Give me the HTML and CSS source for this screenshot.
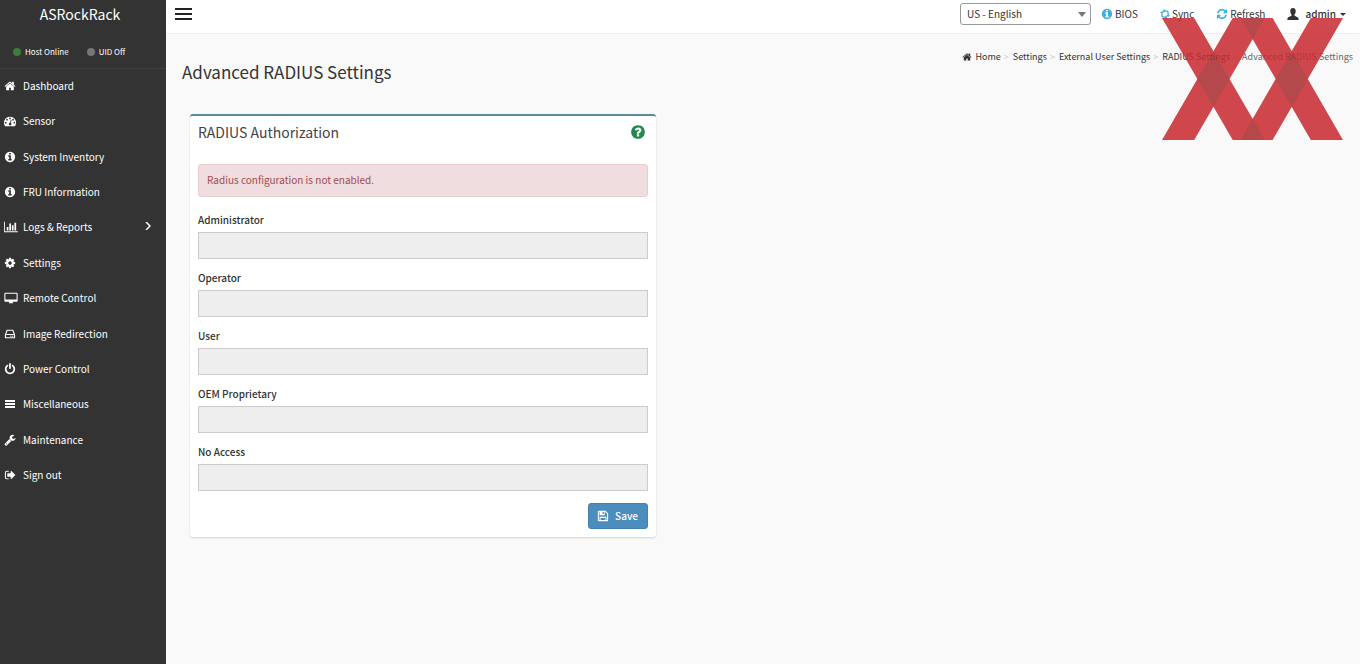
FILE: index.html
```html
<!DOCTYPE html>
<html lang="en">
<head>
<meta charset="utf-8">
<title>Advanced RADIUS Settings</title>
<link rel="stylesheet" href="styles.css">
</head>
<body>
<svg class="defs" aria-hidden="true">
  <symbol id="home" viewBox="0 0 1792 1792"><path d="M1472 992v480q0 26-19 45t-45 19h-384v-384h-256v384h-384q-26 0-45-19t-19-45v-480q0-1 .5-3t.5-3l575-474 575 474q1 2 1 6zm223-69l-62 74q-8 9-21 11h-3q-13 0-21-7l-692-577-692 577q-12 8-24 7-13-2-21-11l-62-74q-8-10-7-23.500t11-21.500l719-599q32-26 76-26t76 26l244 204v-195q0-14 9-23t23-9h192q14 0 23 9t9 23v408l219 182q10 8 11 21.500t-7 23.500z"/></symbol>
  <symbol id="gauge" viewBox="0 0 1792 1792"><path fill-rule="evenodd" d="M896 256A896 896 0 0 1 1652 1632Q1634 1664 1598 1664H194Q158 1664 140 1632A896 896 0 0 1 896 256zM256 1024a128 128 0 1 0 0 256a128 128 0 1 0 0-256zM448 576a128 128 0 1 0 0 256a128 128 0 1 0 0-256zM896 384a128 128 0 1 0 0 256a128 128 0 1 0 0-256zM1344 576a128 128 0 1 0 0 256a128 128 0 1 0 0-256zM1536 1024a128 128 0 1 0 0 256a128 128 0 1 0 0-256zM1004 764l-101 382a192 192 0 1 0 124 33l101-382q8-50-45-72-60-10-79 39z"/></symbol>
  <symbol id="info" viewBox="0 0 1792 1792"><path d="M1152 1376v-160q0-14-9-23t-23-9h-96v-512q0-14-9-23t-23-9h-320q-14 0-23 9t-9 23v160q0 14 9 23t23 9h96v320h-96q-14 0-23 9t-9 23v160q0 14 9 23t23 9h448q14 0 23-9t9-23zm-128-896v-160q0-14-9-23t-23-9h-192q-14 0-23 9t-9 23v160q0 14 9 23t23 9h192q14 0 23-9t9-23zm640 416q0 209-103 385.500t-279.500 279.500-385.500 103-385.500-103-279.500-279.500-103-385.500 103-385.500 279.500-279.500 385.500-103 385.500 103 279.500 279.500 103 385.500z"/></symbol>
  <symbol id="chart" viewBox="0 0 2048 1792"><path d="M640 896v512h-256v-512h256zm384-512v1024h-256v-1024h256zm1024 1152v128h-2048v-1536h128v1408h1920zm-640-896v768h-256v-768h256zm384-384v1152h-256v-1152h256z"/></symbol>
  <symbol id="cog" viewBox="0 0 1792 1792"><path d="M1152 896q0-106-75-181t-181-75-181 75-75 181 75 181 181 75 181-75 75-181zm512-109v222q0 12-8 23t-20 13l-185 28q-19 54-39 91 35 50 107 138 10 12 10 25t-9 23q-27 37-99 108t-94 71q-12 0-26-9l-138-108q-44 23-91 38-16 136-29 186-7 28-36 28h-222q-14 0-24.500-8.500t-11.500-21.500l-28-184q-49-16-90-37l-141 107q-10 9-25 9-14 0-25-11-126-114-165-168-7-10-7-23 0-12 8-23 15-21 51-66.500t54-70.500q-27-50-41-99l-183-27q-13-2-21-12.500t-8-23.500v-222q0-12 8-23t19-13l186-28q14-46 39-92-40-57-107-138-10-12-10-24 0-10 9-23 26-36 98.500-107.500t94.500-71.500q13 0 26 10l138 107q44-23 91-38 16-136 29-186 7-28 36-28h222q14 0 24.500 8.500t11.500 21.500l28 184q49 16 90 37l142-107q9-9 24-9 13 0 25 10 129 119 165 170 7 8 7 22 0 12-8 23-15 21-51 66.500t-54 70.500q26 50 41 98l183 28q13 2 21 12.500t8 23.500z"/></symbol>
  <symbol id="desktop" viewBox="0 0 2048 1792"><path fill-rule="evenodd" d="M160 128H1888Q2016 128 2016 256V1312Q2016 1440 1888 1440H1280V1540Q1344 1580 1344 1664H704Q704 1580 768 1540V1440H160Q32 1440 32 1312V256Q32 128 160 128zM190 256V1120H1858V256z"/></symbol>
  <symbol id="drive" viewBox="0 0 1792 1792"><path fill-rule="evenodd" d="M480 256H1312Q1390 256 1420 340L1640 980Q1664 1040 1664 1100V1400Q1664 1536 1530 1536H262Q128 1536 128 1400V1100Q128 1040 152 980L372 340Q402 256 480 256zM520 420L350 900H1442L1272 420zM290 1060V1380H1502V1060zM1040 1130a90 90 0 1 0 0 180a90 90 0 1 0 0-180zM1296 1130a90 90 0 1 0 0 180a90 90 0 1 0 0-180z"/></symbol>
  <symbol id="power" viewBox="0 0 1792 1792"><path d="M1664 896q0 156-61 298t-164 245-245 164-298 61-298-61-245-164-164-245-61-298q0-182 80.500-343t226.500-270q43-32 95.500-25t83.500 50q32 42 24.500 94.500t-49.500 84.500q-98 74-151.500 181t-53.500 228q0 104 40.500 198.500t109.500 163.500 163.500 109.500 198.500 40.500 198.500-40.500 163.500-109.500 109.500-163.500 40.500-198.500q0-121-53.500-228t-151.500-181q-42-32-49.500-84.500t24.500-94.500q31-43 84-50t95 25q146 109 226.500 270t80.500 343zm-640-768v640q0 52-38 90t-90 38-90-38-38-90v-640q0-52 38-90t90-38 90 38 38 90z"/></symbol>
  <symbol id="bars" viewBox="0 0 12 12"><path d="M1 2h10v2H1zM1 5h10v2H1zM1 8h10v2H1z"/></symbol>
  <symbol id="wrench" viewBox="0 0 1792 1792"><path d="M448 1472q0-26-19-45t-45-19-45 19-19 45 19 45 45 19 45-19 19-45zm644-420l-682 682q-37 37-90 37-52 0-91-37l-106-108q-38-36-38-90 0-53 38-91l681-681q39 98 114.500 173.500t173.500 114.500zm634-435q0 39-23 106-47 134-164.500 217.500t-258.500 83.500q-185 0-316.500-131.500t-131.500-316.500 131.500-316.500 316.500-131.500q58 0 121.500 16.500t107.500 46.500q16 11 16 28t-16 28l-293 169v224l193 107q5-3 79-48.500t135.500-81 70.500-35.500q15 0 23.500 10t8.500 25z"/></symbol>
  <symbol id="signout" viewBox="0 0 1792 1792"><path d="M704 1400v136H416Q128 1536 128 1248V544Q128 256 416 256H704V400H430Q280 400 280 544V1248Q280 1400 430 1400zM1696 896L1100 1490Q1000 1550 1000 1440V1172H556Q492 1172 492 1088V704Q492 620 556 620H1000V352Q1000 242 1100 302z"/></symbol>
  <symbol id="refresh" viewBox="0 0 1792 1792"><path d="M1639 1056q0 5-1 7-64 268-268 434.500t-478 166.500q-146 0-282.500-55t-243.500-157l-129 129q-19 19-45 19t-45-19-19-45v-448q0-26 19-45t45-19h448q26 0 45 19t19 45-19 45l-137 137q71 66 161 102t187 36q134 0 250-65t186-179q11-17 53-117 8-23 30-23h192q13 0 22.500 9.500t9.500 22.500zm25-800v448q0 26-19 45t-45 19h-448q-26 0-45-19t-19-45 19-45l138-138q-148-137-349-137-134 0-250 65t-186 179q-11 17-53 117-8 23-30 23h-199q-13 0-22.500-9.500t-9.500-22.500v-7q65-268 270-434.500t480-166.500q146 0 284 55.500t245 156.500l130-129q19-19 45-19t45 19 19 45z"/></symbol>
  <symbol id="sync" viewBox="0 0 16 16"><path d="M5.500 3H9.500Q13 3 13 6.500V11M10.500 13H6.500Q3 13 3 9.500V5" fill="none" stroke="currentColor" stroke-width="2"/><path d="M7.500 0v6L4 3zM8.500 10v6L12 13zM0 6.500L3 3l3 3.500zM10 9.500h6L13 13z"/></symbol>
  <symbol id="user" viewBox="0 0 16 16"><path d="M8 0C10.600 0 11.800 2 11.600 4.500C11.500 6.500 10.600 7.800 10 8.800V10.300C12 11.400 15.500 12 15.500 14.800V16H.5V14.800C.5 12 4 11.400 6 10.300V8.800C5.400 7.800 4.500 6.500 4.400 4.500C4.200 2 5.400 0 8 0z"/></symbol>
  <symbol id="help" viewBox="0 0 1792 1792"><path d="M1024 1376v-192q0-14-9-23t-23-9h-192q-14 0-23 9t-9 23v192q0 14 9 23t23 9h192q14 0 23-9t9-23zm256-672q0-88-55.500-163t-138.500-116-170-41q-243 0-371 213-15 24 8 42l132 100q7 6 19 6 16 0 25-12 53-68 86-92 34-24 86-24 48 0 85.500 26t37.500 59q0 38-20 61t-68 45q-63 28-115.500 86.500t-52.500 125.500v36q0 14 9 23t23 9h192q14 0 23-9t9-23q0-19 21.500-49.500t54.500-49.500q32-18 49-28.500t46-35 44.500-48 28-60.500 12.500-81zm384 192q0 209-103 385.500t-279.500 279.500-385.500 103-385.500-103-279.500-279.500-103-385.500 103-385.500 279.500-279.500 385.500-103 385.500 103 279.500 279.500 103 385.500z"/></symbol>
  <symbol id="floppy" viewBox="0 0 14 14"><path fill-rule="evenodd" d="M2 1H10L13 4V12Q13 13 12 13H2Q1 13 1 12V2Q1 1 2 1zM2.200 2.200V11.800H3V8H11V11.800H11.800V4.500L9.500 2.200H9V6H3V2.200zM4.200 9.200V11.800H9.800V9.200zM6.500 2.200V4.800H8V2.200z"/></symbol>
</svg>
<div class="app">
  <aside class="sidebar">
    <a class="brand" href="#">ASRockRack</a>
    <div class="status">
      <span class="state"><i class="dot dot-on"></i>Host Online</span>
      <span class="state"><i class="dot"></i>UID Off</span>
    </div>
    <nav>
      <ul class="menu">
        <li><a href="#"><svg class="icon"><use href="#home"/></svg>Dashboard</a></li>
        <li><a href="#"><svg class="icon"><use href="#gauge"/></svg>Sensor</a></li>
        <li><a href="#"><svg class="icon"><use href="#info"/></svg>System Inventory</a></li>
        <li><a href="#"><svg class="icon"><use href="#info"/></svg>FRU Information</a></li>
        <li><a href="#"><svg class="icon icon-wide"><use href="#chart"/></svg>Logs &amp; Reports<svg class="chevron" viewBox="0 0 6 8"><path d="M1 0L5 4L1 8"/></svg></a></li>
        <li><a href="#"><svg class="icon"><use href="#cog"/></svg>Settings</a></li>
        <li><a href="#"><svg class="icon icon-wide"><use href="#desktop"/></svg>Remote Control</a></li>
        <li><a href="#"><svg class="icon"><use href="#drive"/></svg>Image Redirection</a></li>
        <li><a href="#"><svg class="icon"><use href="#power"/></svg>Power Control</a></li>
        <li><a href="#"><svg class="icon"><use href="#bars"/></svg>Miscellaneous</a></li>
        <li><a href="#"><svg class="icon"><use href="#wrench"/></svg>Maintenance</a></li>
        <li><a href="#"><svg class="icon"><use href="#signout"/></svg>Sign out</a></li>
      </ul>
    </nav>
  </aside>
  <div class="page">
    <header class="topbar">
      <button class="toggle" type="button" aria-label="Toggle navigation"><i></i><i></i><i></i></button>
      <div class="tools">
        <div class="language">
          <select aria-label="Language"><option>US - English</option></select>
        </div>
        <a class="tool" href="#"><svg class="icon blue"><use href="#info"/></svg>BIOS</a>
        <a class="tool" href="#"><svg class="icon-small blue"><use href="#sync"/></svg>Sync</a>
        <a class="tool" href="#"><svg class="icon blue"><use href="#refresh"/></svg>Refresh</a>
        <a class="tool tool-user" href="#"><svg class="icon"><use href="#user"/></svg>admin<i class="caret"></i></a>
      </div>
    </header>
    <main>
      <div class="heading">
        <h1>Advanced RADIUS Settings</h1>
        <ol class="crumbs">
          <li><a href="#"><svg class="icon-small"><use href="#home"/></svg>Home</a></li>
          <li><a href="#">Settings</a></li>
          <li><a href="#">External User Settings</a></li>
          <li><a href="#">RADIUS Settings</a></li>
          <li class="current">Advanced RADIUS Settings</li>
        </ol>
      </div>
      <div class="columns">
        <section class="card">
          <div class="card-head">
            <h2>RADIUS Authorization</h2>
            <button class="help" type="button" aria-label="Help"><svg><use href="#help"/></svg></button>
          </div>
          <form>
            <div class="alert" role="alert">Radius configuration is not enabled.</div>
            <div class="field"><label for="administrator">Administrator</label><input id="administrator" type="text" disabled></div>
            <div class="field"><label for="operator">Operator</label><input id="operator" type="text" disabled></div>
            <div class="field"><label for="user-field">User</label><input id="user-field" type="text" disabled></div>
            <div class="field"><label for="oem">OEM Proprietary</label><input id="oem" type="text" disabled></div>
            <div class="field"><label for="none">No Access</label><input id="none" type="text" disabled></div>
            <button class="save" type="button"><svg class="icon"><use href="#floppy"/></svg>Save</button>
          </form>
        </section>
      </div>
    </main>
  </div>
</div>
<svg class="mark" viewBox="0 0 540 364" aria-hidden="true">
  <path class="mark-band" d="M0 0H96L307 364H211zM211 0H307L96 364H0zM234 0H330L540 364H444zM444 0H540L330 364H234z"/>
  <path class="mark-cross" d="M153.500 99L201.500 182L153.500 265L105.500 182zM387 99L435 182L387 265L339 182zM234 0H307L270.500 63zM234 364H307L270.500 301z"/>
</svg>
</body>
</html>
```
FILE: styles.css
```css
* { box-sizing: border-box; }

body {
  margin: 0;
  font-family: "Noto Sans CJK SC", "Noto Sans", sans-serif;
  font-size: 10px;
  line-height: 16px;
  color: #333;
  background: #f9f9f9;
}

a { color: inherit; text-decoration: none; }
svg { flex: none; fill: currentColor; }
ul, ol { margin: 0; padding: 0; list-style: none; }
button, input, select { font: inherit; color: inherit; }

.defs { display: none; }
.icon { width: 12px; height: 12px; }
.icon-wide { width: 14px; }
.icon-small { width: 10px; height: 10px; }
.blue { color: #3fb0dc; }

.app { display: flex; min-height: 100vh; }

.sidebar { flex: none; width: 166px; background: #333; color: #fff; }
.brand { display: block; height: 36px; padding-right: 6px; font-size: 14px; line-height: 28px; text-align: center; }
.status { display: flex; gap: 18px; height: 33px; padding: 8px 13px; border-bottom: 1px solid #414141; font-size: 8px; }
.state { display: flex; align-items: center; gap: 4px; }
.dot { width: 8px; height: 8px; border-radius: 50%; background: #777; }
.dot-on { background: #3f7a41; }

.menu { display: grid; grid-template-rows: repeat(12, 1fr); height: 425px; }
.menu a { display: flex; align-items: center; height: 100%; padding: 0 15px 2px 4px; }
.menu .icon { margin-right: 7px; }
.menu .icon-wide { margin-right: 5px; }
.chevron { width: 6px; height: 8px; margin: 0 0 2px auto; fill: none; stroke: currentColor; stroke-width: 1.5; }

.page { flex: 1; min-width: 0; }
.topbar { display: flex; justify-content: space-between; height: 34px; padding: 3px 14px 8px 9px; border-bottom: 1px solid #eee; background: #fff; }
.toggle { display: flex; flex-direction: column; justify-content: center; gap: 3px; width: 17px; padding: 0; border: 0; background: none; }
.toggle i { height: 2px; background: #222; }
.tools { display: flex; align-items: center; gap: 22px; }
.language { position: relative; width: 131px; margin-right: -12px; }
.language::after { content: ""; position: absolute; top: 9px; right: 5px; border: 4px solid transparent; border-top: 5px solid #777; border-bottom: 0; pointer-events: none; }
.language select { display: block; width: 100%; height: 22px; padding: 0 6px; border: 1px solid #999; border-radius: 3px; background: #fff; appearance: none; }
.tool { display: flex; align-items: center; gap: 2px; }
.tool-user { gap: 6px; font-weight: 500; }
.caret { margin-left: -2px; border: 3px solid transparent; border-top-color: #333; border-bottom: 0; }

.heading { display: flex; justify-content: space-between; align-items: flex-start; height: 80px; padding: 15px 7px 0 16px; }
h1 { margin: 10px 0 0; font-size: 17px; font-weight: 400; line-height: 26px; }
.crumbs { display: flex; font-size: 9px; }
.crumbs a { display: inline-flex; align-items: center; gap: 3px; }
.crumbs li + li::before { content: ">"; padding: 0 4px 0 3px; color: #ccc; }
.crumbs .current { color: #666; }

.columns { display: grid; grid-template-columns: 5fr 7fr; padding: 0 6px 0 12px; }
.card { margin: 0 12px; padding: 0 8px 8px; border-top: 2px solid #5b8a9f; border-radius: 3px; background: #fff; box-shadow: 0 1px 2px rgba(0, 0, 0, .15); }
.card-head { display: flex; justify-content: space-between; align-items: center; height: 48px; padding: 0 2px 17px 0; }
h2 { margin: 0; font-size: 14px; font-weight: 400; line-height: 20px; color: #444; }
.help { padding: 0; border: 0; background: none; color: #26864f; }
.help svg { display: block; width: 16px; height: 16px; }
.alert { margin-bottom: 15px; padding: 7px 8px 8px; border: 1px solid #ebccd1; border-radius: 3px; background: #f0dddf; color: #a14b50; }
.field { margin-bottom: 11px; }
.field label { display: block; height: 20px; font-weight: 500; }
.field input { display: block; width: 100%; height: 27px; border: 1px solid #ccc; background: #eee; }
.save { display: flex; align-items: center; gap: 6px; height: 26px; margin: 12px 0 0 auto; padding: 0 9px 0 8px; border: 1px solid #4282b0; border-radius: 3px; background: #4b8dbd; color: #fff; font-weight: 500; }

/* Watermark laid over the top right corner */
.mark { position: absolute; top: 18px; right: 17px; width: 181px; height: 122px; opacity: .85; pointer-events: none; }
.mark-band { fill: #c8292f; }
.mark-cross { fill: #aa2a2d; }
```
